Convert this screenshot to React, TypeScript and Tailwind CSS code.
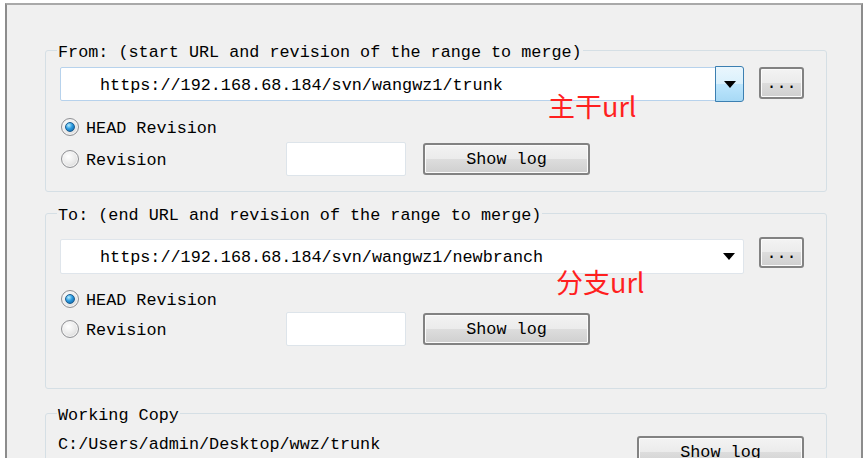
import type { ReactNode } from "react";

const mono = "font-[family-name:'Liberation_Mono','Courier_New',monospace] text-[16.8px] text-black";

function Group({ title, className, children }: { title: string; className: string; children: ReactNode }) {
  return (
    <div className={`relative rounded-[3px] border border-[#d5dfe5] ${className}`}>
      {/* legend sits over the top border */}
      <span className={`${mono} absolute left-[11px] top-[2px] -translate-y-1/2 bg-[#f0f0f0] px-[1px] leading-[20px] whitespace-pre`}>
        {title}
      </span>
      {children}
    </div>
  );
}

function Radio({ checked }: { checked?: boolean }) {
  return (
    <span className="flex h-[18px] w-[18px] shrink-0 items-center justify-center rounded-full border border-[#8f9094] bg-[radial-gradient(circle_at_40%_35%,#ffffff,#e8e8e8_55%,#c8c8c8)] shadow-[inset_0_0_0_1px_#f6f6f6]">
      {checked && (
        <span className="h-[10px] w-[10px] rounded-full border border-[#1b5c8e] bg-[radial-gradient(circle_at_35%_30%,#b8eeff,#2b9be0_45%,#0b5a9c)]" />
      )}
    </span>
  );
}

function WinButton({ children, className }: { children: ReactNode; className: string }) {
  return (
    <button
      className={`${mono} flex items-center justify-center rounded-[3px] border-2 border-[#828282] bg-[linear-gradient(#f3f3f3,#ebebeb_50%,#dddddd_50%,#cfcfcf)] pt-[3px] shadow-[inset_0_0_0_1px_#fbfbfb] leading-none whitespace-pre ${className}`}
    >
      {children}
    </button>
  );
}

function Arrow() {
  return (
    <svg width="12" height="7" viewBox="0 0 12 7">
      <polygon points="0,0 12,0 6,7" fill="#000" />
    </svg>
  );
}

function RevisionRows({ top, gap }: { top: string; gap: string }) {
  return (
    <>
      <div className={`flex h-[24px] items-center ${top}`}>
        <span className="ml-[1px]">
          <Radio checked />
        </span>
        <span className={`${mono} ml-[7px] pt-[4px] leading-none whitespace-pre`}>HEAD Revision</span>
      </div>
      <div className={`flex h-[34px] items-center ${gap}`}>
        <div className="flex w-[226px] items-center">
          <span className="ml-[1px]">
            <Radio />
          </span>
          <span className={`${mono} ml-[7px] pt-[4px] leading-none`}>Revision</span>
        </div>
        <div className="h-[34px] w-[120px] rounded-[2px] border border-[#dde4ea] bg-white" />
        <WinButton className="ml-[17px] h-[32px] w-[167px]">Show log</WinButton>
      </div>
    </>
  );
}

export default function App() {
  return (
    <div className="relative h-[467px] w-[865px] overflow-hidden bg-white">
      <div className="ml-[5px] mt-[3px] h-[455px] w-[858px] overflow-hidden border-x-2 border-t-2 border-x-[#8c8c8c] border-t-[#a9a9a9] bg-[#f0f0f0] pl-[38px] pt-[45px]">
        {/* From */}
        <Group title="From: (start URL and revision of the range to merge)" className="w-[782px] pb-[15px] pl-[14px] pr-[22px] pt-[16px]">
          <div className="flex items-start">
            <div className="flex h-[34px] flex-1 items-center rounded-[2px] border border-[#b7d2ec] bg-white">
              <span className={`${mono} flex-1 pl-[39px] pt-[4px] leading-none whitespace-pre`}>https://192.168.68.184/svn/wangwz1/trunk</span>
              <span className="-my-[2px] -mr-[1px] flex h-[36px] w-[29px] items-center justify-center rounded-r-[3px] border border-[#3c7fb1] bg-[linear-gradient(#eaf6fd,#d9f0fc_50%,#bee6fd_50%,#a7d9f5)]">
                <Arrow />
              </span>
            </div>
            <WinButton className="ml-[15px] h-[32px] w-[45px]">...</WinButton>
          </div>
          <RevisionRows top="mt-[14px]" gap="mt-[3px]" />
        </Group>

        {/* To */}
        <Group title="To: (end URL and revision of the range to merge)" className="mt-[21px] w-[782px] pb-[42px] pl-[14px] pr-[22px] pt-[25px]">
          <div className="flex items-start">
            <div className="flex h-[35px] flex-1 items-center rounded-[2px] border border-[#dfe5eb] bg-white">
              <span className={`${mono} flex-1 pl-[39px] pt-[4px] leading-none whitespace-pre`}>https://192.168.68.184/svn/wangwz1/newbranch</span>
              <span className="mr-[8px] flex items-center">
                <Arrow />
              </span>
            </div>
            <WinButton className="-mt-[2px] ml-[15px] h-[31px] w-[45px]">...</WinButton>
          </div>
          <RevisionRows top="mt-[13px]" gap="mt-[1px]" />
        </Group>

        {/* Working copy */}
        <Group title="Working Copy" className="mt-[24px] h-[80px] w-[782px] pl-[12px] pr-[22px] pt-[22px]">
          <div className="flex items-start justify-between">
            <span className={`${mono} -mt-[1px] leading-[20px] whitespace-pre`}>C:/Users/admin/Desktop/wwz/trunk</span>
            <WinButton className="h-[32px] w-[167px]">Show log</WinButton>
          </div>
        </Group>
      </div>

      {/* red annotations drawn over the dialog */}
      <span className="absolute left-[548px] top-[92px] font-['Noto_Sans_CJK_SC',sans-serif] text-[27px] leading-[27px] text-[#ff1f1f]">
        主干url
      </span>
      <span className="absolute left-[556px] top-[268px] font-['Noto_Sans_CJK_SC',sans-serif] text-[27px] leading-[27px] text-[#ff1f1f]">
        分支url
      </span>
    </div>
  );
}
